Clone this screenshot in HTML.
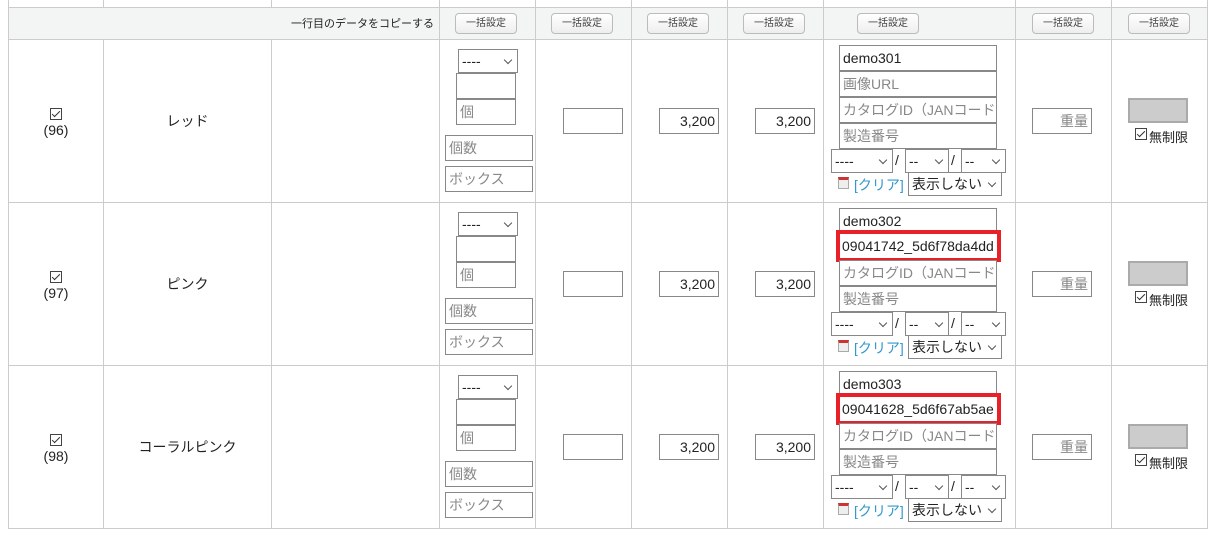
<!DOCTYPE html>
<html><head><meta charset="utf-8"><style>
*{box-sizing:border-box;margin:0;padding:0}
body{width:1210px;height:538px;background:#fff;position:relative;overflow:hidden;font-family:"Liberation Sans","Noto Sans CJK JP",sans-serif;font-size:14px;color:#222}
.a{position:absolute}
.vl{position:absolute;width:1px;background:#ccc;top:0;height:529px}
.hl{position:absolute;height:1px;background:#ccc;left:8px;width:1200px}
.in{position:absolute;border:1px solid #888;background:#fff;height:26px;line-height:24px;padding:0 3px;font-size:14px;white-space:nowrap;overflow:hidden}
.ph{color:#888}
.r{text-align:right}
.sel{position:absolute;border:1px solid #888;background:#fff;height:24px;line-height:22px;padding:0 3px;font-size:14px}
.sel:after{content:"";position:absolute;right:6px;top:7px;width:5px;height:5px;border-right:1px solid #555;border-bottom:1px solid #555;transform:rotate(45deg)}
.btn{position:absolute;top:13px;height:21px;width:62px;border:1px solid #bbb;border-radius:4px;background:linear-gradient(#fff,#eee);font-size:10px;line-height:19px;text-align:center;color:#444}
.cb{position:absolute;width:12px;height:12px;border:1px solid #444;background:#fff}
.cb:after{content:"";position:absolute;left:3px;top:0px;width:3px;height:7px;border-right:1px solid #333;border-bottom:1px solid #333;transform:rotate(45deg)}
.red{left:836px;top:28px;width:165px;height:32px;line-height:24px;border:4px solid #e8202a;padding:0 2px}
</style></head><body>
<div class="a" style="left:8px;top:7px;width:1200px;height:32px;background:#f3f4f4"></div>
<div class="hl" style="top:7px"></div><div class="hl" style="top:39px"></div><div class="hl" style="top:202px"></div><div class="hl" style="top:365px"></div><div class="hl" style="top:528px"></div>
<div class="vl" style="left:8px"></div><div class="vl" style="left:103px;height:7px"></div><div class="vl" style="left:271px;height:7px"></div>
<div class="vl" style="left:103px;top:39px;height:490px"></div><div class="vl" style="left:271px;top:39px;height:490px"></div>
<div class="vl" style="left:439px"></div><div class="vl" style="left:535px"></div><div class="vl" style="left:631px"></div><div class="vl" style="left:727px"></div><div class="vl" style="left:823px"></div><div class="vl" style="left:1015px"></div><div class="vl" style="left:1111px"></div><div class="vl" style="left:1207px"></div>
<div class="a" style="left:280px;top:15px;font-size:11px;width:154px;text-align:right">一行目のデータをコピーする</div>
<div class="btn" style="left:455px">一括設定</div><div class="btn" style="left:551px">一括設定</div><div class="btn" style="left:647px">一括設定</div><div class="btn" style="left:743px">一括設定</div><div class="btn" style="left:857px">一括設定</div><div class="btn" style="left:1032px">一括設定</div><div class="btn" style="left:1128px">一括設定</div>

<div class="a" style="left:0;top:39px;width:1210px;height:163px">
<div class="cb" style="left:50px;top:69px"></div><div class="a" style="left:36px;top:83px;width:40px;text-align:center">(96)</div>
<div class="a" style="left:104px;top:72px;width:167px;text-align:center">レッド</div>
<div class="sel" style="left:458px;top:10px;width:60px">----</div>
<div class="in" style="left:456px;top:34px;width:60px"></div><div class="in ph" style="left:456px;top:60px;width:60px">個</div>
<div class="in ph" style="left:445px;top:96px;width:88px">個数</div><div class="in ph" style="left:445px;top:127px;width:88px">ボックス</div>
<div class="in" style="left:563px;top:69px;width:60px"></div>
<div class="in r" style="left:659px;top:69px;width:60px">3,200</div><div class="in r" style="left:755px;top:69px;width:60px">3,200</div>
<div class="in" style="left:839px;top:6px;width:158px">demo301</div>
<div class="in ph" style="left:839px;top:32px;width:158px">画像URL</div>
<div class="in ph" style="left:839px;top:58px;width:158px">カタログID（JANコード）</div>
<div class="in ph" style="left:839px;top:84px;width:158px">製造番号</div>
<div class="sel" style="left:831px;top:110px;width:62px">----</div><div class="a" style="left:895px;top:113px">/</div>
<div class="sel" style="left:905px;top:110px;width:44px">--</div><div class="a" style="left:951px;top:113px">/</div>
<div class="sel" style="left:961px;top:110px;width:45px">--</div>
<div class="a" style="left:838px;top:138px;width:11px;height:12px;border:1px solid #aaa;border-top:3px solid #c33;background:#eee"></div>
<div class="a" style="left:854px;top:136px;color:#39c">[クリア]</div>
<div class="sel" style="left:908px;top:133px;width:94px">表示しない</div>
<div class="in r ph" style="left:1032px;top:69px;width:60px">重量</div>
<div class="a" style="left:1128px;top:59px;width:60px;height:25px;background:#ccc;border:2px solid #aaa"></div>
<div class="cb" style="left:1135px;top:89px"></div><div class="a" style="left:1149px;top:88px;font-size:13px">無制限</div>
</div>

<div class="a" style="left:0;top:202px;width:1210px;height:163px">
<div class="cb" style="left:50px;top:69px"></div><div class="a" style="left:36px;top:83px;width:40px;text-align:center">(97)</div>
<div class="a" style="left:104px;top:72px;width:167px;text-align:center">ピンク</div>
<div class="sel" style="left:458px;top:10px;width:60px">----</div>
<div class="in" style="left:456px;top:34px;width:60px"></div><div class="in ph" style="left:456px;top:60px;width:60px">個</div>
<div class="in ph" style="left:445px;top:96px;width:88px">個数</div><div class="in ph" style="left:445px;top:127px;width:88px">ボックス</div>
<div class="in" style="left:563px;top:69px;width:60px"></div>
<div class="in r" style="left:659px;top:69px;width:60px">3,200</div><div class="in r" style="left:755px;top:69px;width:60px">3,200</div>
<div class="in" style="left:839px;top:6px;width:158px">demo302</div>
<div class="in red">09041742_5d6f78da4dd</div>
<div class="in ph" style="left:839px;top:58px;width:158px">カタログID（JANコード）</div>
<div class="in ph" style="left:839px;top:84px;width:158px">製造番号</div>
<div class="sel" style="left:831px;top:110px;width:62px">----</div><div class="a" style="left:895px;top:113px">/</div>
<div class="sel" style="left:905px;top:110px;width:44px">--</div><div class="a" style="left:951px;top:113px">/</div>
<div class="sel" style="left:961px;top:110px;width:45px">--</div>
<div class="a" style="left:838px;top:138px;width:11px;height:12px;border:1px solid #aaa;border-top:3px solid #c33;background:#eee"></div>
<div class="a" style="left:854px;top:136px;color:#39c">[クリア]</div>
<div class="sel" style="left:908px;top:133px;width:94px">表示しない</div>
<div class="in r ph" style="left:1032px;top:69px;width:60px">重量</div>
<div class="a" style="left:1128px;top:59px;width:60px;height:25px;background:#ccc;border:2px solid #aaa"></div>
<div class="cb" style="left:1135px;top:89px"></div><div class="a" style="left:1149px;top:88px;font-size:13px">無制限</div>
</div>

<div class="a" style="left:0;top:365px;width:1210px;height:163px">
<div class="cb" style="left:50px;top:69px"></div><div class="a" style="left:36px;top:83px;width:40px;text-align:center">(98)</div>
<div class="a" style="left:104px;top:72px;width:167px;text-align:center">コーラルピンク</div>
<div class="sel" style="left:458px;top:10px;width:60px">----</div>
<div class="in" style="left:456px;top:34px;width:60px"></div><div class="in ph" style="left:456px;top:60px;width:60px">個</div>
<div class="in ph" style="left:445px;top:96px;width:88px">個数</div><div class="in ph" style="left:445px;top:127px;width:88px">ボックス</div>
<div class="in" style="left:563px;top:69px;width:60px"></div>
<div class="in r" style="left:659px;top:69px;width:60px">3,200</div><div class="in r" style="left:755px;top:69px;width:60px">3,200</div>
<div class="in" style="left:839px;top:6px;width:158px">demo303</div>
<div class="in red">09041628_5d6f67ab5ae</div>
<div class="in ph" style="left:839px;top:58px;width:158px">カタログID（JANコード）</div>
<div class="in ph" style="left:839px;top:84px;width:158px">製造番号</div>
<div class="sel" style="left:831px;top:110px;width:62px">----</div><div class="a" style="left:895px;top:113px">/</div>
<div class="sel" style="left:905px;top:110px;width:44px">--</div><div class="a" style="left:951px;top:113px">/</div>
<div class="sel" style="left:961px;top:110px;width:45px">--</div>
<div class="a" style="left:838px;top:138px;width:11px;height:12px;border:1px solid #aaa;border-top:3px solid #c33;background:#eee"></div>
<div class="a" style="left:854px;top:136px;color:#39c">[クリア]</div>
<div class="sel" style="left:908px;top:133px;width:94px">表示しない</div>
<div class="in r ph" style="left:1032px;top:69px;width:60px">重量</div>
<div class="a" style="left:1128px;top:59px;width:60px;height:25px;background:#ccc;border:2px solid #aaa"></div>
<div class="cb" style="left:1135px;top:89px"></div><div class="a" style="left:1149px;top:88px;font-size:13px">無制限</div>
</div>
</body></html>
